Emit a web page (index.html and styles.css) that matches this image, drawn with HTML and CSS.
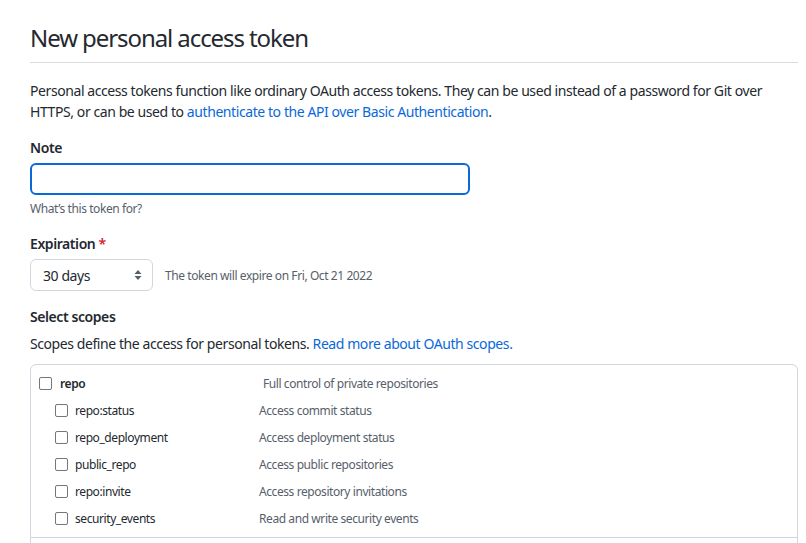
FILE: index.html
```html
<!DOCTYPE html>
<html lang="en">
<head>
<meta charset="utf-8">
<title>New personal access token</title>
<link rel="stylesheet" href="styles.css">
</head>
<body>
<main class="page">
  <h1 class="title">New personal access token</h1>
  <p class="intro">Personal access tokens function like ordinary OAuth access tokens. They can be used instead of a password for Git over HTTPS, or can be used to <a href="#" class="link">authenticate to the API over Basic Authentication</a>.</p>

  <div class="field">
    <label class="label" for="note">Note</label>
    <input id="note" class="text-input" type="text">
    <p class="hint">What’s this token for?</p>
  </div>

  <div class="field">
    <div class="label">Expiration <span class="required">*</span></div>
    <div class="expiry-row">
      <div class="select">
        <span>30 days</span>
        <svg class="select-arrows" width="8" height="12" viewBox="0 0 8 12"><path d="M4 1 L7.5 5 H0.5 Z M4 11 L7.5 7 H0.5 Z" fill="#57606a"/></svg>
      </div>
      <span class="expiry-note">The token will expire on Fri, Oct 21 2022</span>
    </div>
  </div>

  <div class="field">
    <div class="label">Select scopes</div>
    <p class="scopes-desc">Scopes define the access for personal tokens. <a href="#" class="link">Read more about OAuth scopes.</a></p>
    <div class="scopes">
      <div class="scope-group">
        <div class="scope-row main">
          <span class="checkbox"></span>
          <span class="scope-name strong">repo</span>
          <span class="scope-desc">Full control of private repositories</span>
        </div>
        <div class="scope-row sub">
          <span class="checkbox"></span>
          <span class="scope-name">repo:status</span>
          <span class="scope-desc">Access commit status</span>
        </div>
        <div class="scope-row sub">
          <span class="checkbox"></span>
          <span class="scope-name">repo_deployment</span>
          <span class="scope-desc">Access deployment status</span>
        </div>
        <div class="scope-row sub">
          <span class="checkbox"></span>
          <span class="scope-name">public_repo</span>
          <span class="scope-desc">Access public repositories</span>
        </div>
        <div class="scope-row sub">
          <span class="checkbox"></span>
          <span class="scope-name">repo:invite</span>
          <span class="scope-desc">Access repository invitations</span>
        </div>
        <div class="scope-row sub">
          <span class="checkbox"></span>
          <span class="scope-name">security_events</span>
          <span class="scope-desc">Read and write security events</span>
        </div>
      </div>
      <div class="scope-group next"></div>
    </div>
  </div>
</main>
</body>
</html>
```
FILE: styles.css
```css
html, body {
  margin: 0;
  padding: 0;
  background: #ffffff;
}
body {
  font-family: "Noto Sans", "Open Sans", sans-serif;
  color: #24292f;
  font-size: 14px;
  line-height: 21px;
  letter-spacing: -0.03em;
}
.page {
  padding: 20px 8px 0 30px;
}
.title {
  margin: 0;
  font-size: 24px;
  font-weight: 400;
  line-height: 36px;
  letter-spacing: -0.045em;
  padding-bottom: 6px;
  border-bottom: 1px solid #d8dee4;
}
.intro {
  margin: 17px 0 0;
}
.link {
  color: #0969da;
  text-decoration: none;
}
.field {
  margin-top: 15px;
}
.label {
  display: block;
  font-weight: 600;
  font-size: 14px;
  line-height: 21px;
}
.required {
  color: #cf222e;
}
.text-input {
  display: block;
  box-sizing: border-box;
  margin: 5px 0 0;
  width: 440px;
  height: 32px;
  border: 2px solid #0969da;
  border-radius: 6px;
  outline: none;
  background: #fff;
}
.hint {
  margin: 5px 0 0;
  font-size: 12px;
  line-height: 18px;
  color: #57606a;
}
.expiry-row {
  display: flex;
  align-items: center;
  gap: 12px;
  margin-top: 5px;
}
.select {
  box-sizing: border-box;
  width: 123px;
  height: 32px;
  border: 1px solid #d0d7de;
  border-radius: 6px;
  display: flex;
  align-items: center;
  justify-content: space-between;
  padding: 0 10px 0 12px;
  font-size: 14px;
}
.select-arrows {
  display: block;
}
.expiry-note {
  font-size: 12px;
  color: #57606a;
}
.scopes-desc {
  margin: 6px 0 0;
}
.scopes {
  margin-top: 10px;
  border: 1px solid #d0d7de;
  border-radius: 6px;
}
.scope-group {
  padding: 5px 0;
}
.scope-group + .scope-group {
  border-top: 1px solid #d0d7de;
}
.scope-group.next {
  height: 30px;
}
.scope-row {
  display: flex;
  align-items: center;
  height: 27px;
  font-size: 12px;
}
.scope-row.main {
  padding-left: 8px;
}
.scope-row.sub {
  padding-left: 24px;
}
.checkbox {
  box-sizing: border-box;
  width: 13px;
  height: 13px;
  border: 1px solid #767676;
  border-radius: 2px;
  margin-right: 8px;
  flex: none;
}
.scope-row.sub .checkbox {
  margin-right: 7px;
}
.scope-name {
  color: #24292f;
}
.main .scope-name {
  width: 203px;
}
.sub .scope-name {
  width: 184px;
}
.strong {
  font-weight: 600;
}
.scope-desc {
  color: #57606a;
}
```
